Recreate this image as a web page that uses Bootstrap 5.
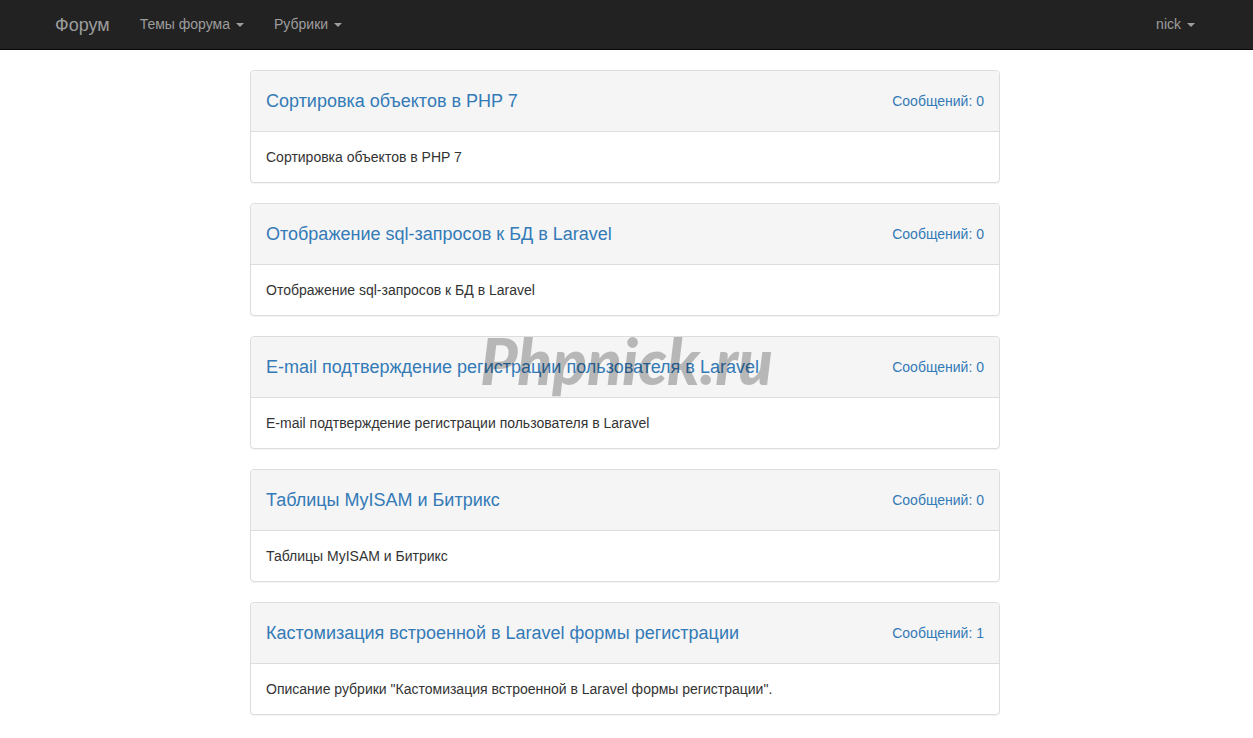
<!DOCTYPE html>
<html lang="ru">
<head>
<meta charset="utf-8">
<meta name="viewport" content="width=device-width, initial-scale=1">
<title>Форум</title>
<link href="https://cdn.jsdelivr.net/npm/bootstrap@5.3.0/dist/css/bootstrap.min.css" rel="stylesheet">
<style>
body { font-family: "Liberation Sans", Arial, sans-serif; font-size: 14px; line-height: 20px; color: #333; background: #fff; }
a { color: #337ab7; text-decoration: none; }
a:hover { text-decoration: underline; }
.container { max-width: 1173px; padding-left: 15px; padding-right: 18px; }
.forum-nav { background: #222; border-bottom: 1px solid #080808; min-height: 50px; margin-bottom: 20px; }
.forum-nav .navbar-brand, .forum-nav .navbar-nav .nav-link { color: #9d9d9d; padding: 14px 15px 15px; margin: 0; line-height: 20px; }
.forum-nav .navbar-brand { font-size: 18px; padding: 15px 15px 14px 0; }
.forum-nav .nav-link:hover, .forum-nav .navbar-brand:hover { color: #fff; text-decoration: none; }
.forum-nav .dropdown-toggle::after { border-width: 4px 4px 0; margin-left: 6px; vertical-align: middle; }
.forum-nav .account .nav-link.dropdown-toggle { padding-right: 0; }
.topic-row { --bs-gutter-x: 30px; }
.topic { border: 1px solid #ddd; border-radius: 4px; box-shadow: 0 1px 1px rgba(0, 0, 0, .05); margin-bottom: 20px; }
.topic .card-header { background: #f5f5f5; border-color: #ddd; padding: 20px 15px; }
.topic .card-body { padding: 15px; }
.topic h4 { font-size: 18px; line-height: 20px; font-weight: 400; margin: 0; }
.watermark { font: italic 900 64px/64px Lato, sans-serif; color: rgba(0, 0, 0, .25); padding-bottom: 16px; pointer-events: none; }
</style>
</head>
<body>
<nav class="forum-nav navbar navbar-expand p-0">
  <div class="container">
    <a class="navbar-brand" href="#">Форум</a>
    <ul class="navbar-nav">
      <li class="nav-item"><a class="nav-link dropdown-toggle" href="#" role="button">Темы форума</a></li>
      <li class="nav-item"><a class="nav-link dropdown-toggle" href="#" role="button">Рубрики</a></li>
    </ul>
    <ul class="navbar-nav account ms-auto">
      <li class="nav-item"><a class="nav-link dropdown-toggle" href="#" role="button">nick</a></li>
    </ul>
  </div>
</nav>
<main class="container">
  <div class="row topic-row justify-content-center">
    <div class="col-12 col-md-8">
      <article class="card topic">
        <div class="card-header d-flex justify-content-between align-items-center gap-3">
          <h4><a href="#">Сортировка объектов в PHP 7</a></h4><a class="text-nowrap" href="#">Сообщений: 0</a>
        </div>
        <div class="card-body">Сортировка объектов в PHP 7</div>
      </article>
      <article class="card topic">
        <div class="card-header d-flex justify-content-between align-items-center gap-3">
          <h4><a href="#">Отображение sql-запросов к БД в Laravel</a></h4><a class="text-nowrap" href="#">Сообщений: 0</a>
        </div>
        <div class="card-body">Отображение sql-запросов к БД в Laravel</div>
      </article>
      <article class="card topic">
        <div class="card-header d-flex justify-content-between align-items-center gap-3">
          <h4><a href="#">E-mail подтверждение регистрации пользователя в Laravel</a></h4><a class="text-nowrap" href="#">Сообщений: 0</a>
        </div>
        <div class="card-body">E-mail подтверждение регистрации пользователя в Laravel</div>
      </article>
      <article class="card topic">
        <div class="card-header d-flex justify-content-between align-items-center gap-3">
          <h4><a href="#">Таблицы MyISAM и Битрикс</a></h4><a class="text-nowrap" href="#">Сообщений: 0</a>
        </div>
        <div class="card-body">Таблицы MyISAM и Битрикс</div>
      </article>
      <article class="card topic">
        <div class="card-header d-flex justify-content-between align-items-center gap-3">
          <h4><a href="#">Кастомизация встроенной в Laravel формы регистрации</a></h4><a class="text-nowrap" href="#">Сообщений: 1</a>
        </div>
        <div class="card-body">Описание рубрики "Кастомизация встроенной в Laravel формы регистрации".</div>
      </article>
    </div>
  </div>
</main>
<div class="watermark position-fixed top-50 start-50 translate-middle">Phpnick.ru</div>
<script src="https://cdn.jsdelivr.net/npm/bootstrap@5.3.0/dist/js/bootstrap.bundle.min.js"></script>
</body>
</html>
